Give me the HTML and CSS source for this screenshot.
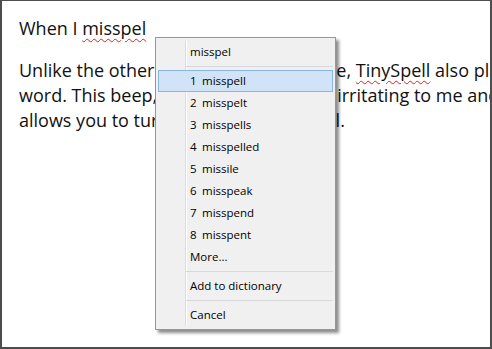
FILE: index.html
```html
<!DOCTYPE html>
<html>
<head>
  <meta charset="UTF-8">
  <title>TinySpell</title>
  <link rel="stylesheet" href="styles.css">
</head>
<body>

<div class="frame">

  <p class="line">When I <span class="typo">misspel</span></p>

  <p class="para">
    <span class="line">Unlike the other spell checkers you use, <span class="typo">TinySpell</span> also plays a sound</span>
    <span class="line">word. This beep, which many find too irritating to me and to others,</span>
    <span class="line">allows you to turn the noise off as well.</span>
  </p>

  <div class="menu">
    <div class="menu-inner">
      <div class="item">misspel</div>
      <div class="sep"></div>
      <div class="item active"><span class="num">1</span>misspell</div>
      <div class="item"><span class="num">2</span>misspelt</div>
      <div class="item"><span class="num">3</span>misspells</div>
      <div class="item"><span class="num">4</span>misspelled</div>
      <div class="item"><span class="num">5</span>missile</div>
      <div class="item"><span class="num">6</span>misspeak</div>
      <div class="item"><span class="num">7</span>misspend</div>
      <div class="item"><span class="num">8</span>misspent</div>
      <div class="item">More...</div>
      <div class="sep"></div>
      <div class="item">Add to dictionary</div>
      <div class="sep"></div>
      <div class="item">Cancel</div>
    </div>
  </div>

</div>

</body>
</html>
```

FILE: styles.css
```css
body {
  margin: 0;
  padding: 0;
  background-color: #fff;
}
.frame {
  position: relative;
  width: 492px;
  height: 349px;
  box-sizing: border-box;
  border-style: solid;
  border-color: #4d4d4d;
  border-width: 1px 2px 2px 2px;
  padding: 15px 0 0 17px;
  overflow: hidden;
  font-family: "Open Sans", sans-serif;
  font-size: 18px;
  line-height: 25px;
  color: #111;
}
.frame p {
  margin: 0;
  white-space: nowrap;
}
.para {
  margin-top: 17px !important;
}
.line {
  display: block;
}
.typo {
  text-decoration: underline wavy #e02020;
  text-decoration-thickness: 1px;
  text-underline-offset: 3px;
}

/* context menu */
.menu {
  position: absolute;
  left: 153px;
  top: 36px;
  width: 181px;
  box-sizing: border-box;
  padding: 3px 2px;
  background-color: #f0f0f0;
  border: 1px solid #979797;
  box-shadow: 3px 3px 3px rgba(0, 0, 0, 0.45);
  font-size: 11.5px;
  line-height: 20px;
  color: #000;
}
.menu-inner {
  background: linear-gradient(to right, #f0f0f0 27px, #dcdcdc 27px, #dcdcdc 28px, #fff 28px, #fff 29px, #f0f0f0 29px);
}
.item {
  padding-left: 31px;
  border: 1px solid transparent;
}
.item.active {
  background-color: #d1e3f6;
  border-color: #88b6e6;
}
.num {
  display: inline-block;
  width: 12px;
}
.sep {
  height: 1px;
  margin: 3px 0 3px 28px;
  background-color: #d9d9d9;
}
```
